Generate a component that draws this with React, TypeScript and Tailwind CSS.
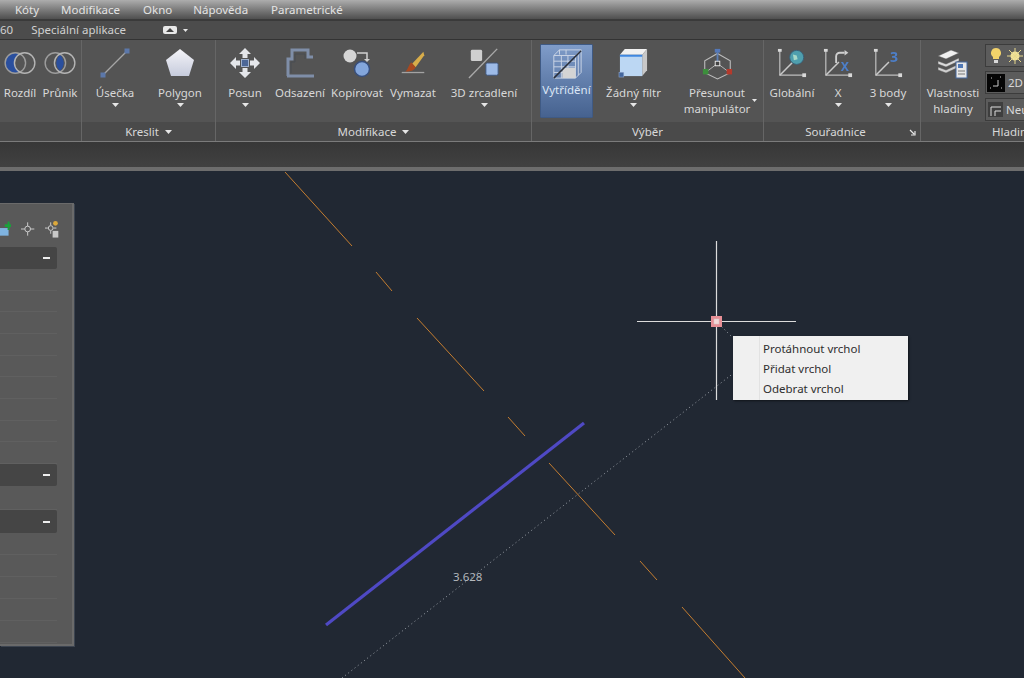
import type { ReactNode } from 'react';

const Caret = () => (
  <svg width="7" height="4" viewBox="0 0 7 4" className="block">
    <path d="M0 0h7L3.5 4z" fill="#e6e6e6" />
  </svg>
);

const TinyCaret = () => (
  <svg width="5" height="3" viewBox="0 0 7 4" className="block">
    <path d="M0 0h7L3.5 4z" fill="#e6e6e6" />
  </svg>
);

interface ToolProps {
  width: string;
  icon: ReactNode;
  label: ReactNode;
  caret?: boolean;
}

// one big ribbon button: icon on top, label under it
function Tool({ width, icon, label, caret }: ToolProps) {
  return (
    <div className={`${width} flex flex-col items-center shrink-0`}>
      <div className="h-[44px] flex items-center justify-center blur-[0.4px]">{icon}</div>
      <div className="text-[11.5px] leading-[16px] text-center whitespace-nowrap">{label}</div>
      {caret && (
        <div className="mt-[2px]">
          <Caret />
        </div>
      )}
    </div>
  );
}

function Panel({ width, title, children }: { width: string; title: ReactNode; children: ReactNode }) {
  return (
    <div className={`${width} shrink-0 flex flex-col border-r border-[#666666] overflow-hidden`}>
      <div className="h-[82px] flex pt-[1px]">{children}</div>
      <div className="h-[19px] pt-[1px] bg-[#4a4a4a] flex items-center justify-center gap-[6px] text-[11.5px] relative">
        {title}
      </div>
    </div>
  );
}

const Venn = ({ mode }: { mode: 'left' | 'mid' }) => (
  <svg width="32" height="26" viewBox="0 0 34 28">
    {mode === 'left' && <circle cx="12" cy="14" r="11" fill="#2a4f9e" />}
    {mode === 'left' && <circle cx="22" cy="14" r="11" fill="#555555" />}
    {mode === 'mid' && <path d="M17 5.500a11 11 0 0 1 0 17a11 11 0 0 1 0-17z" fill="#2a4f9e" />}
    <circle cx="12" cy="14" r="11" fill="none" stroke="#9d9d9d" strokeWidth="1.500" />
    <circle cx="22" cy="14" r="11" fill="none" stroke="#b5b5b5" strokeWidth="1.500" />
  </svg>
);

const LineIcon = () => (
  <svg width="30" height="30" viewBox="0 0 30 30">
    <path d="M3 27L27 3" stroke="#a6a6a6" strokeWidth="1.300" />
    <rect x="0.500" y="24.500" width="5" height="5" fill="#5c78aa" />
    <rect x="24.500" y="0.500" width="5" height="5" fill="#5c78aa" />
  </svg>
);

const PolygonIcon = () => (
  <svg width="32" height="32" viewBox="0 0 32 32">
    <defs>
      <linearGradient id="pg" x1="0" y1="0" x2="0" y2="1">
        <stop offset="0" stopColor="#f4f4f8" />
        <stop offset="1" stopColor="#c6cbdc" />
      </linearGradient>
    </defs>
    <path d="M16 2l14 11-5 16H7L2 13z" fill="url(#pg)" />
  </svg>
);

const MoveIcon = () => (
  <svg width="32" height="32" viewBox="0 0 32 32" fill="#e4e6ea">
    <path d="M16 1l6 6h-3.500v4h-5V7H10z" />
    <path d="M16 31l6-6h-3.500v-4h-5v4H10z" />
    <path d="M1 16l6-6v3.500h4v5H7V22z" />
    <path d="M31 16l-6-6v3.500h-4v5h4V22z" />
    <rect x="12.500" y="12.500" width="7" height="7" fill="#4c6797" stroke="#9fb0cc" />
  </svg>
);

const OffsetIcon = () => (
  <svg width="32" height="32" viewBox="0 0 32 32" fill="none">
    <path d="M4 29V12h4V3h16v7h5" stroke="#7f8ea8" strokeWidth="3" />
    <path d="M3 29h27" stroke="#7f8ea8" strokeWidth="3" />
    <path d="M7 26V15h4V7h10v5" stroke="#494c52" strokeWidth="1" />
  </svg>
);

const CopyIcon = () => (
  <svg width="30" height="30" viewBox="0 0 30 30">
    <circle cx="8" cy="8" r="6.500" fill="#d5d5d5" />
    <circle cx="20" cy="21" r="7.500" fill="#83a6dc" stroke="#384f7c" strokeWidth="1.500" />
    <path d="M15 5h10v7" stroke="#d0d0d0" strokeWidth="1.500" fill="none" />
    <path d="M22 11l3 3 3-3z" fill="#d0d0d0" />
  </svg>
);

const EraseIcon = () => (
  <svg width="28" height="26" viewBox="0 0 30 30">
    <path d="M27 2L14 16l4 4L28 6z" fill="#d8ad4a" />
    <path d="M13 14l5 6c-2 4-6 5-12 5 3-2 4-8 7-11z" fill="#a8481f" />
    <path d="M2 26h26" stroke="#a3a3a3" strokeWidth="1.500" />
  </svg>
);

const MirrorIcon = () => (
  <svg width="32" height="32" viewBox="0 0 34 34">
    <rect x="3" y="3" width="12" height="12" rx="1.500" fill="#cfcfcf" />
    <rect x="19" y="17" width="13" height="13" rx="1.500" fill="#9dbbe8" stroke="#3e567f" />
    <path d="M1 33L31 2" stroke="#a9a9a9" strokeWidth="1.500" />
  </svg>
);

const SortIcon = () => (
  <svg width="32" height="32" viewBox="0 0 34 34" fill="none" stroke="#cdd6e6" strokeWidth="1">
    <path d="M3 8h23v24H3z" />
    <path d="M26 8l6-6H9L3 8M32 2v24l-6 6" />
    <path d="M3 14h23M3 20h23M3 26h23M11 8v24M18 8v24M9 2v5M16 2v5M29 5v24" />
    <path d="M12 21h14v11H12z" fill="#d4d4d4" stroke="none" />
    <path d="M3 32L32 3" stroke="#2a2f3a" strokeWidth="1.600" />
  </svg>
);

const FilterIcon = () => (
  <svg width="31" height="31" viewBox="0 0 32 32">
    <path d="M2 7l5-6h23l-5 6z" fill="#f1f1f1" />
    <path d="M25 7l5-6v22l-5 6z" fill="#c8c8c8" />
    <rect x="2" y="7" width="23" height="22" fill="#bcd7f3" />
    <rect x="2" y="7" width="23" height="2" fill="#3f87e0" />
    <rect x="1" y="25" width="5" height="5" fill="#44679e" stroke="#9bb0d4" strokeWidth="0.500" />
  </svg>
);

const GizmoIcon = () => (
  <svg width="31" height="33" viewBox="0 0 34 36" fill="none">
    <path d="M17 7l14 8v13l-14 7-14-7V15z" stroke="#bcbcbc" strokeWidth="1.200" />
    <path d="M17 3v15" stroke="#5d7fb5" strokeWidth="2" />
    <path d="M5 27l12-9M29 27l-12-9" stroke="#bdbdbd" />
    <rect x="14" y="2" width="6" height="4" fill="#5478b8" />
    <rect x="14.500" y="15.500" width="5" height="5" stroke="#eeeeee" fill="#444444" />
    <rect x="1" y="24" width="6" height="6" fill="#3c8f3c" />
    <rect x="27" y="24" width="6" height="6" fill="#b53a2c" />
  </svg>
);

const Axes = ({ children }: { children?: ReactNode }) => (
  <svg width="30" height="30" viewBox="0 0 32 32" fill="none">
    <path d="M3 2v27h26" stroke="#bdbdbd" strokeWidth="1.300" />
    <path d="M3 29L17 15" stroke="#c9c9c9" strokeWidth="1.600" />
    <rect x="1" y="1" width="4" height="3" fill="#d8d8d8" />
    <rect x="27" y="27" width="4" height="4" fill="#d8d8d8" />
    {children}
  </svg>
);

const LayerIcon = () => (
  <svg width="32" height="32" viewBox="0 0 32 32">
    <path d="M1 9l13-6 8 3-13 6z" fill="#efefef" stroke="#555555" strokeWidth="0.500" />
    <path d="M1 14l8 3 13-6v3L9 20l-8-3z" fill="#dadada" stroke="#555555" strokeWidth="0.500" />
    <path d="M1 20l8 3 13-6v3L9 26l-8-3z" fill="#cfcfcf" stroke="#555555" strokeWidth="0.500" />
    <rect x="19" y="15" width="11" height="16" fill="#e7e7e7" stroke="#46689e" />
    <rect x="21" y="17" width="5" height="4" fill="#4f77b5" />
    <path d="M21 24h7M21 27h7" stroke="#777777" />
  </svg>
);

const PaletteSection = ({ rows, height }: { rows: number; height: string }) => (
  <div className={`${height} flex flex-col`}>
    {Array.from({ length: rows }).map((_, i) => (
      <div key={i} className="flex-1 border-b border-[#606060]" />
    ))}
  </div>
);

const PaletteHeader = ({ height }: { height: string }) => (
  <div className={`${height} bg-[#454545] rounded-r-[2px] flex items-center justify-end pr-[7px]`}>
    <div className="w-[7px] h-[2px] bg-[#eeeeee]" />
  </div>
);

export default function App() {
  return (
    <div className="w-[1024px] h-[678px] overflow-hidden flex flex-col bg-[#212833] text-[#d8d8d8] font-['Noto_Sans','Open_Sans',sans-serif]">
      {/* menu bar */}
      <div className="h-[21px] shrink-0 bg-gradient-to-b from-[#adadad] to-[#4f4f4f] border-b-2 border-[#3a3a3a] flex items-center text-[11.5px] leading-[16px] text-[#e4e4e4]">
        <span className="ml-[15px]">Kóty</span>
        <span className="ml-[22px]">Modifikace</span>
        <span className="ml-[23px]">Okno</span>
        <span className="ml-[21px]">Nápověda</span>
        <span className="ml-[23px]">Parametrické</span>
      </div>

      {/* ribbon tabs */}
      <div className="h-[19px] shrink-0 bg-[#4c4c4c] border-b border-[#333333] flex items-center text-[11.5px] text-[#d0d0d0]">
        <span>60</span>
        <span className="ml-[18px]">Speciální aplikace</span>
        <svg width="14" height="8" viewBox="0 0 14 8" className="ml-[37px]">
          <rect width="14" height="8" rx="2" fill="#e8e8e8" />
          <path d="M3 6l4-4 4 4z" fill="#444444" />
        </svg>
        <div className="ml-[6px]">
          <TinyCaret />
        </div>
      </div>

      {/* ribbon */}
      <div className="h-[102px] shrink-0 bg-[#545454] border-b border-[#7b7b7b] flex">
        <Panel width="w-[82px]" title={<span>&nbsp;</span>}>
          <Tool width="w-[40px]" icon={<Venn mode="left" />} label="Rozdíl" />
          <Tool width="w-[40px]" icon={<Venn mode="mid" />} label="Průnik" />
        </Panel>
        <Panel
          width="w-[134px]"
          title={
            <>
              <span>Kreslit</span>
              <Caret />
            </>
          }
        >
          <Tool width="w-[66px]" icon={<LineIcon />} label="Úsečka" caret />
          <Tool width="w-[64px]" icon={<PolygonIcon />} label="Polygon" caret />
        </Panel>
        <Panel
          width="w-[316px]"
          title={
            <>
              <span>Modifikace</span>
              <Caret />
            </>
          }
        >
          <Tool width="w-[58px]" icon={<MoveIcon />} label="Posun" caret />
          <Tool width="w-[52px]" icon={<OffsetIcon />} label="Odsazení" />
          <Tool width="w-[62px]" icon={<CopyIcon />} label="Kopírovat" />
          <Tool width="w-[50px]" icon={<EraseIcon />} label="Vymazat" />
          <Tool width="w-[92px]" icon={<MirrorIcon />} label="3D zrcadlení" caret />
        </Panel>
        <Panel width="w-[232px]" title={<span>Výběr</span>}>
          <div className="w-[8px] shrink-0" />
          <div className="w-[53px] h-[74px] mt-[3px] -mb-[3px] shrink-0 rounded-[1px] border border-[#3f5a84] bg-gradient-to-b from-[#7f9cc9] to-[#46628f] text-[#dbe6f5] flex flex-col items-center">
            <div className="h-[36px] mt-[1px] flex items-center blur-[0.4px]">
              <SortIcon />
            </div>
            <div className="text-[11.5px] leading-[16px] whitespace-nowrap">Vytřídění</div>
          </div>
          <Tool width="w-[81px]" icon={<FilterIcon />} label="Žádný filtr" caret />
          <div className="w-[86px] shrink-0 flex flex-col items-center relative">
            <div className="h-[44px] flex items-center blur-[0.4px]">
              <GizmoIcon />
            </div>
            <div className="text-[11.5px] leading-[16px] text-center">
              Přesunout
              <br />
              manipulátor
            </div>
            <div className="absolute right-[3px] top-[58px]">
              <TinyCaret />
            </div>
          </div>
        </Panel>
        <Panel
          width="w-[157px]"
          title={
            <>
              <span className="mr-[13px]">Souřadnice</span>
              <svg width="7" height="7" viewBox="0 0 7 7" className="absolute right-[4px] top-[7px]">
                <path d="M1 1l4 4M6 2v4H2" stroke="#e6e6e6" strokeWidth="1.200" fill="none" />
              </svg>
            </>
          }
        >
          <Tool
            width="w-[56px]"
            icon={
              <Axes>
                <circle cx="21" cy="10" r="7.500" fill="#4f9fae" stroke="#3a5f78" />
                <path d="M17 7l4 1 1 4-4 1z" fill="#a8d8c8" />
              </Axes>
            }
            label="Globální"
          />
          <Tool
            width="w-[36px]"
            icon={
              <Axes>
                <path d="M14 16V9a4 4 0 0 1 4-4h5" stroke="#cfcfcf" strokeWidth="2" />
                <path d="M23 2l4 3-4 3z" fill="#cfcfcf" />
                <text x="19" y="25" fontSize="13" fontWeight="700" fill="#4d7fc9">
                  X
                </text>
              </Axes>
            }
            label="X"
            caret
          />
          <Tool
            width="w-[64px]"
            icon={
              <Axes>
                <text x="18" y="15" fontSize="15" fontWeight="700" fill="#4d7fc9">
                  3
                </text>
              </Axes>
            }
            label="3 body"
            caret
          />
        </Panel>
        <div className="flex-1 min-w-0 flex flex-col overflow-hidden">
          <div className="h-[82px] flex pt-[1px]">
            <Tool
              width="w-[64px]"
              icon={<LayerIcon />}
              label={
                <>
                  Vlastnosti
                  <br />
                  hladiny
                </>
              }
            />
            <div className="w-[60px] shrink-0 flex flex-col gap-[4px] pt-[3px]">
              <div className="h-[23px] bg-[#5c5c5c] border border-[#3c3c3c] flex items-center gap-[6px] pl-[5px]">
                <svg width="10" height="16" viewBox="0 0 10 16">
                  <path d="M5 0a5 5 0 0 1 3 9v2H2V9a5 5 0 0 1 3-9z" fill="#f2d26a" />
                  <rect x="3" y="12" width="4" height="3" fill="#d8d8d8" />
                </svg>
                <svg width="16" height="16" viewBox="0 0 16 16">
                  <circle cx="8" cy="8" r="4.500" fill="#f2e39c" />
                  <path d="M8 0v16M0 8h16M2 2l12 12M14 2L2 14" stroke="#e8d98c" strokeWidth="1" />
                </svg>
              </div>
              <div className="h-[23px] bg-[#5c5c5c] border border-[#3c3c3c] flex items-center gap-[3px] pl-[1px] text-[11.5px]">
                <svg width="18" height="18" viewBox="0 0 18 18" className="shrink-0">
                  <rect width="18" height="18" fill="#050505" />
                  <path d="M11 6v6H6M4 4h1M13 3h1M3 14h1M14 14h1" stroke="#c8c8c8" strokeWidth="1" />
                </svg>
                <span>2D</span>
              </div>
              <div className="h-[23px] bg-[#5c5c5c] border border-[#3c3c3c] flex items-center gap-[3px] pl-[2px] text-[11.5px]">
                <svg width="15" height="15" viewBox="0 0 15 15" fill="none" className="shrink-0">
                  <rect width="15" height="15" fill="#3e3e3e" />
                  <path d="M3 14V5h10M7 14V9h6" stroke="#dcdcdc" />
                </svg>
                <span>Neu</span>
              </div>
            </div>
          </div>
          <div className="h-[19px] pt-[1px] bg-[#4a4a4a] text-[11.5px] leading-[18px] pl-[71px] whitespace-nowrap">Hladin</div>
        </div>
      </div>

      {/* strip under the ribbon */}
      <div className="h-[25px] shrink-0 bg-gradient-to-b from-[#373737] to-[#414141]" />
      <div className="h-[4px] shrink-0 bg-[#6d6d6d]" />

      {/* drawing area */}
      <div className="flex-1 relative bg-[#212833]">
        <svg width="1024" height="507" viewBox="0 171 1024 507" className="absolute inset-0" fill="none">
          <g stroke="#c47d30" strokeWidth="1">
            <path d="M285 172L352 246" />
            <path d="M376 272L392 291" />
            <path d="M417 318L484 391" />
            <path d="M508 417L525 436" />
            <path d="M549 463L615 535" />
            <path d="M640 561L657 580" />
            <path d="M682 607L745 678" />
          </g>
          <path d="M326 625L584 423" stroke="#4f49c4" strokeWidth="3.200" />
          <path d="M342 678L735 372M716 321L735 340" stroke="#9aa0a8" strokeWidth="1" strokeDasharray="1 3" />
          <path d="M716.500 241V400M637 321.500H796" stroke="#dcdcdc" strokeWidth="1.200" />
          <rect x="711" y="316" width="11" height="11" fill="#e88f96" />
          <rect x="714" y="319" width="5" height="5" fill="#f6d8d8" stroke="#c9c9c9" strokeWidth="0.500" />
        </svg>

        <span className="absolute left-[453px] top-[398px] text-[11.5px] leading-[16px] text-[#b4b8bd]">3.628</span>

        {/* floating palette */}
        <div className="absolute left-0 top-[32px] w-[74px] h-[443px] bg-[#595959] border-r-[2px] border-b-[2px] border-t border-[#6a6a6a] shadow-[1px_1px_0_#3c4450] pr-[15px]">
          <div className="h-[43px] flex items-center justify-end gap-[10px] pt-[6px] -mr-[2px]">
            <svg width="12" height="16" viewBox="0 0 12 16">
              <rect x="0" y="7" width="9" height="8" fill="#7fb3e0" />
              <path d="M5 3h3V0h2v3h2v3h-2v3H8V6H5z" fill="#19a23a" />
            </svg>
            <svg width="14" height="14" viewBox="0 0 14 14" fill="none" stroke="#d0d0d0">
              <circle cx="7" cy="7" r="3" />
              <path d="M7 0v4M7 10v4M0 7h4M10 7h4" />
            </svg>
            <svg width="15" height="18" viewBox="0 0 15 18" fill="none" stroke="#d0d0d0">
              <circle cx="6" cy="8" r="2.500" />
              <path d="M6 2v3M6 11v3M0 8h3M9 8h3" />
              <circle cx="11" cy="3" r="2.500" fill="#dca93c" stroke="none" />
              <rect x="8" y="11" width="6" height="7" fill="#c8c8c8" stroke="none" />
            </svg>
          </div>
          <PaletteHeader height="h-[22px]" />
          <PaletteSection rows={9} height="h-[195px]" />
          <PaletteHeader height="h-[22px]" />
          <div className="h-[24px] border-b border-[#606060]" />
          <PaletteHeader height="h-[23px]" />
          <PaletteSection rows={5} height="h-[110px]" />
        </div>

        {/* context menu */}
        <div className="absolute left-[733px] top-[165px] w-[175px] h-[64px] bg-[#f0f0f0] shadow-[1px_1px_2px_rgba(0,0,0,0.5)] py-[3px] text-[11.5px] leading-[20px] text-[#2e2e2e]">
          <div className="absolute left-[26px] top-0 bottom-0 w-px bg-[#e2e2e2]" />
          <div className="pl-[30px]">Protáhnout vrchol</div>
          <div className="pl-[30px]">Přidat vrchol</div>
          <div className="pl-[30px]">Odebrat vrchol</div>
        </div>
      </div>
    </div>
  );
}
